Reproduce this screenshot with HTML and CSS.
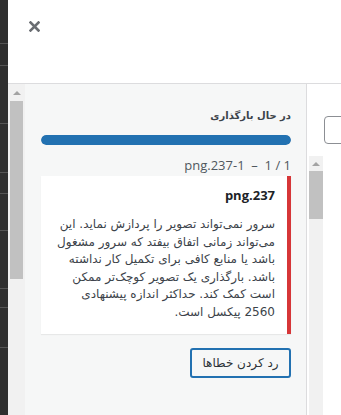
FILE: index.html
```html
<!DOCTYPE html>
<html lang="fa">
<head>
<meta charset="utf-8">
<link rel="stylesheet" href="styles.css">
</head>
<body>
<div class="app">
  <div class="dark">
    <span class="dline l1"></span><span class="dline l2"></span><span class="dline l3"></span>
    <span class="dline l4"></span><span class="dline l5"></span><span class="dline l6"></span>
    <span class="dline l7"></span><span class="dline l8"></span><span class="dline l9"></span>
  </div>
  <div class="main">
    <div class="header">
      <button class="close" aria-label="بستن">
        <svg width="11" height="11" viewBox="0 0 11 11"><path d="M1.5 1.5 L9.5 9.5 M9.5 1.5 L1.5 9.5" stroke="#6a6d72" stroke-width="2.6" stroke-linecap="square"/></svg>
      </button>
    </div>
    <div class="body">
      <div class="sidebar">
        <div class="scrollbar left">
          <div class="arrow"></div>
          <div class="thumb"></div>
        </div>
        <div class="panel" dir="rtl">
          <div class="status">در حال بارگذاری</div>
          <div class="progress"><div class="bar" style="width:100%"></div></div>
          <div class="filecount" dir="ltr">png.237-1 &nbsp;–&nbsp; 1 / 1</div>
          <div class="error">
            <div class="fname" dir="ltr">png.237</div>
            <p class="msg">سرور نمی‌تواند تصویر را پردازش نماید. این می‌تواند زمانی اتفاق بیفتد که سرور مشغول باشد یا منابع کافی برای تکمیل کار نداشته باشد. بارگذاری یک تصویر کوچک‌تر ممکن است کمک کند. حداکثر اندازه پیشنهادی 2560 پیکسل است.</p>
          </div>
          <div class="actions">
            <button class="dismiss">رد کردن خطاها</button>
          </div>
        </div>
      </div>
      <div class="right">
        <div class="search"></div>
        <div class="scrollbar rt">
          <div class="arrow"></div>
          <div class="thumb"></div>
        </div>
      </div>
    </div>
  </div>
</div>
</body>
</html>
```
FILE: styles.css
```css
html, body { margin: 0; padding: 0; }
body { width: 341px; height: 415px; overflow: hidden; background: #fff; font-family: "DejaVu Sans", sans-serif; }
.app { display: flex; height: 415px; }
.dark { width: 8px; background: #2f2f2f; position: relative; flex: none; }
.dline { position: absolute; left: 0; width: 8px; height: 1px; background: #555; }
.l1 { top: 43px; } .l2 { top: 65px; } .l3 { top: 123px; } .l4 { top: 172px; }
.l5 { top: 193px; } .l6 { top: 230px; } .l7 { top: 288px; } .l8 { top: 307px; } .l9 { top: 347px; }
.main { flex: 1; display: flex; flex-direction: column; min-width: 0; }
.header { height: 84px; border-bottom: 1px solid #dcdcde; box-sizing: border-box; display: flex; align-items: flex-start; }
.close { margin: 20px 0 0 20px; width: 12px; height: 12px; padding: 0; border: 0; background: none; display: flex; align-items: center; justify-content: center; }
.body { flex: 1; display: flex; min-height: 0; }
.sidebar { width: 298px; flex: none; background: #f1f1f1; border-right: 1px solid #dcdcde; display: flex; }
.scrollbar { width: 13px; display: flex; flex-direction: column; background: #f1f1f1; }
.scrollbar.left { margin-left: 2px; }
.arrow { height: 17px; display: flex; justify-content: center; align-items: center; }
.arrow::before { content: ""; border-left: 4px solid transparent; border-right: 4px solid transparent; border-bottom: 4px solid #a3a3a3; }
.thumb { background: #c1c1c1; }
.left .thumb { height: 178px; }
.panel { flex: 1; margin-left: 2px; background: #f6f7f7; padding: 0 15px 0 16px; box-sizing: border-box; }
.status { margin-top: 25px; font-size: 10px; font-weight: bold; color: #3c434a; line-height: 14px; }
.progress { margin-top: 12px; height: 10px; border-radius: 5px; background: #dcdcde; overflow: hidden; }
.bar { height: 100%; background: #2271b1; border-radius: 5px; }
.filecount { margin-top: 12px; text-align: right; font-family: "Open Sans", sans-serif; font-size: 13px; line-height: 16px; color: #50575e; }
.error { margin-top: 3px; background: #fff; border-right: 4px solid #d63638; box-shadow: 0 1px 1px rgba(0,0,0,0.06); padding: 10px 12px 12px 12px; }
.fname { text-align: right; font-family: "Open Sans", sans-serif; font-weight: bold; font-size: 13px; color: #1d2327; line-height: 18px; }
.msg { margin: 12px 0 0; font-size: 12px; line-height: 17.6px; color: #3c434a; }
.actions { margin-top: 14px; display: flex; }
.dismiss { width: 101px; height: 30px; border: 2px solid #2271b1; border-radius: 3px; background: #f6f7f7; color: #2c3338; font-family: "DejaVu Sans", sans-serif; font-size: 12px; padding: 0; }
.right { flex: 1; background: #fff; display: flex; flex-direction: column; position: relative; overflow: hidden; }
.search { margin: 32px 0 0 17px; height: 28px; width: 40px; border: 1px solid #8c8f94; border-radius: 4px; box-sizing: border-box; }
.scrollbar.rt { margin: 12px 0 0 2px; flex: 1; width: 14px; }
.rt .arrow { height: 15px; }
.rt .thumb { height: 48px; }
```
